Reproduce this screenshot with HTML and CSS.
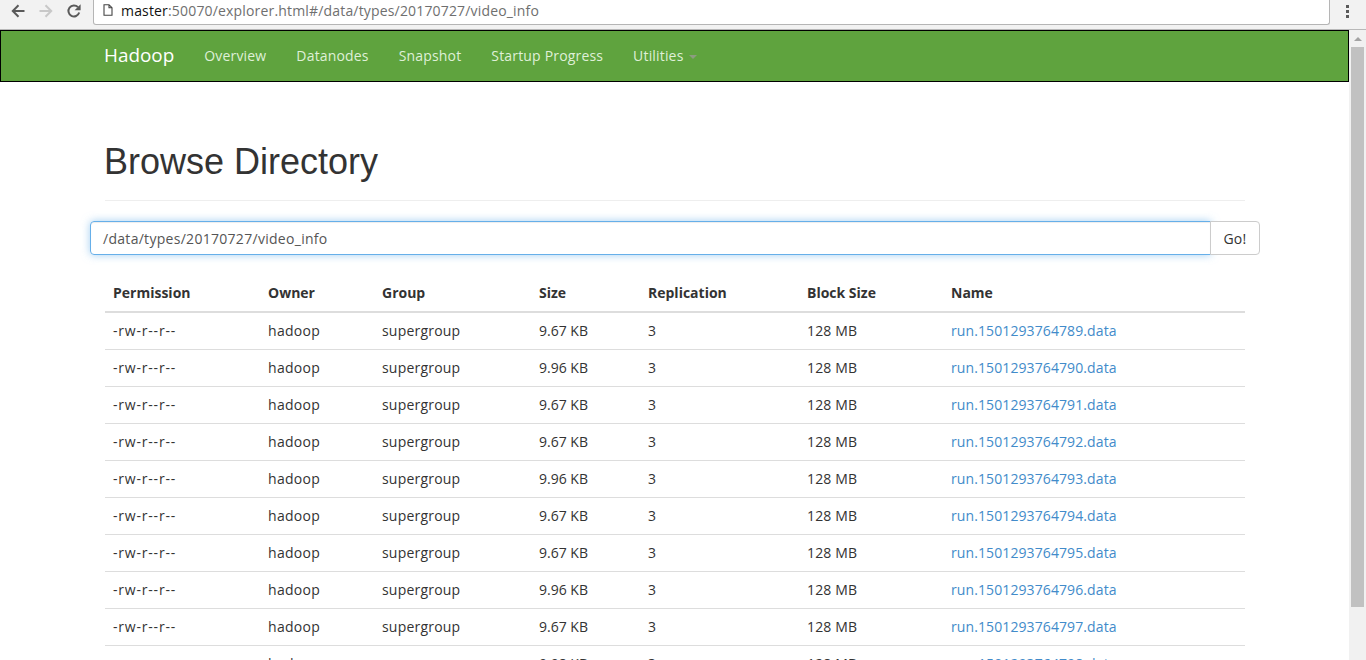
FILE: index.html
```html
<!DOCTYPE html>
<html lang="en">
<head>
<meta charset="utf-8">
<title>Browsing HDFS</title>
<link rel="stylesheet" href="styles.css">
</head>
<body>
<header class="chrome">
  <svg class="tool back" width="16" height="16" viewBox="0 0 16 16"><path d="M14.5 8H3M8.5 2.3 2.8 8l5.7 5.7" fill="none" stroke="#5a5a5a" stroke-width="2"/></svg>
  <svg class="tool forward" width="16" height="16" viewBox="0 0 16 16"><path d="M1.5 8H13M7.5 2.3 13.2 8l-5.7 5.7" fill="none" stroke="#c8c8c8" stroke-width="2"/></svg>
  <svg class="tool reload" width="16" height="16" viewBox="0 0 16 16"><path d="M13.2 9.5A5.5 5.5 0 1 1 12 4.2" fill="none" stroke="#5a5a5a" stroke-width="2"/><path d="M14.6 1.2v6h-6z" fill="#5a5a5a"/></svg>
  <div class="omnibox">
    <svg class="page-icon" width="10" height="12" viewBox="0 0 10 12"><path d="M1 .7h5l3 3v7.6H1zM6 .7v3h3" fill="none" stroke="#444" stroke-width="1.1"/></svg>
    <span class="host">master</span><span class="url">:50070/explorer.html#/data/types/20170727/video_info</span>
  </div>
  <div class="menu-dots"><i></i><i></i><i></i></div>
</header>
<div class="viewport">
  <main class="page">
    <nav class="navbar">
      <a class="brand">Hadoop</a>
      <a class="nav-link">Overview</a>
      <a class="nav-link">Datanodes</a>
      <a class="nav-link">Snapshot</a>
      <a class="nav-link">Startup Progress</a>
      <a class="nav-link">Utilities <b class="caret"></b></a>
    </nav>
    <div class="container">
      <h1 class="title">Browse Directory</h1>
      <div class="input-group">
        <div class="path-input">/data/types/20170727/video_info</div>
        <button class="go">Go!</button>
      </div>
      <table class="listing">
        <thead>
          <tr><th class="c1">Permission</th><th class="c2">Owner</th><th class="c3">Group</th><th class="c4">Size</th><th class="c5">Replication</th><th class="c6">Block Size</th><th>Name</th></tr>
        </thead>
        <tbody>
          <tr><td>-rw-r--r--</td><td>hadoop</td><td>supergroup</td><td>9.67 KB</td><td>3</td><td>128 MB</td><td><a>run.1501293764789.data</a></td></tr>
          <tr><td>-rw-r--r--</td><td>hadoop</td><td>supergroup</td><td>9.96 KB</td><td>3</td><td>128 MB</td><td><a>run.1501293764790.data</a></td></tr>
          <tr><td>-rw-r--r--</td><td>hadoop</td><td>supergroup</td><td>9.67 KB</td><td>3</td><td>128 MB</td><td><a>run.1501293764791.data</a></td></tr>
          <tr><td>-rw-r--r--</td><td>hadoop</td><td>supergroup</td><td>9.67 KB</td><td>3</td><td>128 MB</td><td><a>run.1501293764792.data</a></td></tr>
          <tr><td>-rw-r--r--</td><td>hadoop</td><td>supergroup</td><td>9.96 KB</td><td>3</td><td>128 MB</td><td><a>run.1501293764793.data</a></td></tr>
          <tr><td>-rw-r--r--</td><td>hadoop</td><td>supergroup</td><td>9.67 KB</td><td>3</td><td>128 MB</td><td><a>run.1501293764794.data</a></td></tr>
          <tr><td>-rw-r--r--</td><td>hadoop</td><td>supergroup</td><td>9.67 KB</td><td>3</td><td>128 MB</td><td><a>run.1501293764795.data</a></td></tr>
          <tr><td>-rw-r--r--</td><td>hadoop</td><td>supergroup</td><td>9.96 KB</td><td>3</td><td>128 MB</td><td><a>run.1501293764796.data</a></td></tr>
          <tr><td>-rw-r--r--</td><td>hadoop</td><td>supergroup</td><td>9.67 KB</td><td>3</td><td>128 MB</td><td><a>run.1501293764797.data</a></td></tr>
          <tr><td>-rw-r--r--</td><td>hadoop</td><td>supergroup</td><td>9.98 KB</td><td>3</td><td>128 MB</td><td><a>run.1501293764798.data</a></td></tr>
        </tbody>
      </table>
    </div>
  </main>
  <aside class="scrollbar">
    <span class="arrow"></span>
    <div class="thumb"></div>
  </aside>
</div>
</body>
</html>
```
FILE: styles.css
```css
* { box-sizing: border-box; }
html, body { margin: 0; height: 100%; overflow: hidden; }
body {
  display: flex;
  flex-direction: column;
  height: 660px;
  font-family: "Open Sans", "Noto Sans", sans-serif;
  font-size: 14px;
  color: #333;
  background: #fff;
}
.chrome {
  flex: none;
  height: 30px;
  display: flex;
  align-items: center;
  background: #f2f2f2;
  border-bottom: 1px solid #b8b8b8;
  padding-left: 10px;
}
.tool { flex: none; margin-right: 12px; margin-top: -7px; }
.omnibox {
  flex: none;
  width: 1237px;
  height: 25px;
  margin-top: -5px;
  margin-left: -1px;
  display: flex;
  align-items: center;
  background: #fff;
  border: 1px solid #b5b5b5;
  border-top: 0;
  border-radius: 0 0 3px 3px;
  padding: 0 0 3px 9px;
  font-size: 14px;
  letter-spacing: .17px;
}
.page-icon { margin-right: 8px; }
.host { color: #111; }
.url { color: #6f6f6f; }
.menu-dots {
  margin-left: 16px;
  margin-top: -7px;
  display: flex;
  flex-direction: column;
  gap: 2px;
}
.menu-dots i { display: block; width: 3px; height: 3px; background: #5a5a5a; }
.viewport { flex: 1; min-height: 0; display: flex; overflow: hidden; }
.page { flex: 1; min-width: 0; overflow: hidden; }
.navbar {
  height: 52px;
  display: flex;
  align-items: center;
  background: #5fa33e;
  border: 1px solid #000;
  padding: 0 0 2px 88px;
}
.brand { color: #fff; font-size: 18.9px; padding: 0 15px; }
.nav-link { color: #dff0d8; padding: 0 15px; letter-spacing: .17px; }
.caret {
  display: inline-block;
  width: 0;
  height: 0;
  margin-left: 2px;
  vertical-align: middle;
  border-top: 4px solid #8c9c80;
  border-left: 4px solid transparent;
  border-right: 4px solid transparent;
}
.container { width: 1170px; margin-left: 90px; padding: 0 15px; }
.title {
  margin: 40px 0 20px;
  padding: 20px 0 9px;
  height: 79px;
  font-family: "Liberation Sans", Arial, sans-serif;
  font-size: 36px;
  font-weight: 400;
  line-height: 1.1;
  text-indent: -1px;
  border-bottom: 1px solid #eee;
}
.input-group { display: flex; height: 34px; margin: 0 -15px 20px; }
.path-input {
  flex: 1;
  display: flex;
  align-items: center;
  padding: 0 12px;
  color: #555;
  letter-spacing: .29px;
  border: 1px solid #66afe9;
  border-radius: 4px 0 0 4px;
  box-shadow: inset 0 1px 1px rgba(0,0,0,.075), 0 0 8px rgba(102,175,233,.6);
}
.go {
  flex: none;
  width: 50px;
  margin-left: -1px;
  font: inherit;
  letter-spacing: .3px;
  color: #333;
  background: #fff;
  border: 1px solid #ccc;
  border-radius: 0 4px 4px 0;
}
.listing { width: 1140px; border-collapse: collapse; table-layout: fixed; }
.listing th, .listing td { padding: 8px; line-height: 20px; text-align: left; }
.listing th { font-weight: 700; border-bottom: 2px solid #ddd; }
.listing td { border-top: 1px solid #ddd; }
.listing thead + tbody tr:first-child td { border-top: 0; }
.listing td:nth-child(1) { letter-spacing: .8px; }
.listing td:nth-child(2) { letter-spacing: .3px; }
.listing td:nth-child(3) { letter-spacing: .2px; }
.listing td:nth-child(6) { letter-spacing: .15px; }
.listing td:nth-child(7) { letter-spacing: .1px; }
.c1 { width: 155px; } .c2 { width: 114px; } .c3 { width: 157px; }
.c4 { width: 109px; } .c5 { width: 159px; } .c6 { width: 144px; }
.listing a { color: #428bca; }
.scrollbar { flex: none; width: 17px; background: #f1f1f1; display: flex; flex-direction: column; align-items: center; }
.arrow {
  margin-top: 7px;
  width: 0;
  height: 0;
  border-left: 4px solid transparent;
  border-right: 4px solid transparent;
  border-bottom: 4px solid #a3a3a3;
}
.thumb { margin-top: 6px; width: 13px; height: 560px; background: #c1c1c1; }
```
